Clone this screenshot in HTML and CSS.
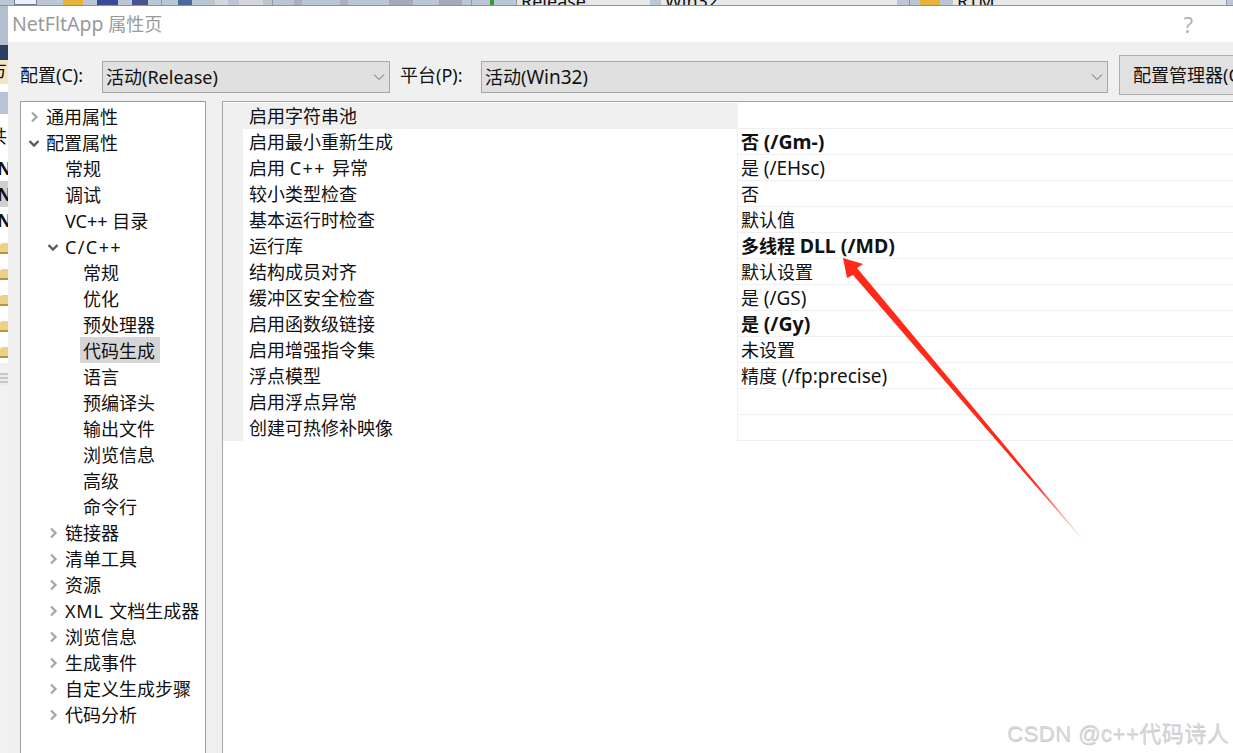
FILE: index.html
```html
<!DOCTYPE html>
<html lang="zh-CN">
<head>
<meta charset="utf-8">
<title>NetFltApp 属性页</title>
<link rel="stylesheet" href="styles.css">
</head>
<body>
<div class="toolbar">
  <i class="chip c1"></i><i class="chip c2"></i><i class="chip c3"></i><i class="chip c4"></i><i class="sep s1"></i><i class="chip c5"></i><i class="chip c6"></i><i class="chip c7"></i><i class="sep s2"></i><i class="chip c8"></i><i class="chip c9"></i><i class="chip c10"></i><i class="chip c11"></i><i class="sep s3"></i><i class="chip c12"></i>
  <span class="combo combo-a"><span>Release</span></span>
  <span class="combo combo-b"><span>Win32</span></span>
  <i class="sep s4"></i><i class="chip c13"></i>
  <span class="combo combo-c"><span>RTM</span></span>
</div>
<div class="stage">
  <div class="behind">
    <div class="b-seg b-icon"></div>
    <div class="b-seg b-navy"></div>
    <div class="b-seg b-cream"><span>方</span></div>
    <div class="b-seg b-white"></div>
    <div class="b-seg b-blue"></div>
    <div class="b-seg b-text"><span>共</span></div>
    <div class="b-seg b-name"><b>N</b></div>
    <div class="b-seg b-name b-sel"><b>N</b></div>
    <div class="b-seg b-name"><b>N</b></div>
    <div class="b-seg b-folder"><i></i></div>
    <div class="b-seg b-folder"><i></i></div>
    <div class="b-seg b-folder"><i></i></div>
    <div class="b-seg b-folder"><i></i></div>
    <div class="b-seg b-folder"><i></i></div>
    <div class="b-seg b-lines"></div>
  </div>
  <main class="dialog">
    <header class="title-bar">
      <span class="title"><span class="title-name">NetFltApp</span> 属性页</span>
      <span class="help">?</span>
    </header>
    <div class="body">
      <div class="config-row">
        <label class="field-label label-config">配置(C):</label>
        <div class="select select-config"><span>活动(Release)</span>
          <svg class="caret" width="12" height="8" viewBox="0 0 12 8"><path d="M1 1.5 6 6.5 11 1.5" fill="none" stroke="#6a6a6a" stroke-width="1"/></svg>
        </div>
        <label class="field-label label-platform">平台(P):</label>
        <div class="select select-platform"><span>活动(<span class="lat">Win32</span>)</span>
          <svg class="caret" width="12" height="8" viewBox="0 0 12 8"><path d="M1 1.5 6 6.5 11 1.5" fill="none" stroke="#6a6a6a" stroke-width="1"/></svg>
        </div>
        <button class="manager">配置管理器(O)...</button>
      </div>
      <div class="panes">
        <ul class="tree">
          <li class="l0"><svg class="chev closed" viewBox="0 0 12 12"><path d="M4 1.5 8.5 6 4 10.5"/></svg>通用属性</li>
          <li class="l0"><svg class="chev open" viewBox="0 0 12 12"><path d="M1.5 4 6 8.5 10.5 4"/></svg>配置属性</li>
          <li class="l1">常规</li>
          <li class="l1">调试</li>
          <li class="l1">VC++ 目录</li>
          <li class="l1"><svg class="chev open" viewBox="0 0 12 12"><path d="M1.5 4 6 8.5 10.5 4"/></svg><span class="spaced">C/C++</span></li>
          <li class="l2"><span>常规</span></li>
          <li class="l2"><span>优化</span></li>
          <li class="l2"><span>预处理器</span></li>
          <li class="l2"><span class="selected">代码生成</span></li>
          <li class="l2"><span>语言</span></li>
          <li class="l2"><span>预编译头</span></li>
          <li class="l2"><span>输出文件</span></li>
          <li class="l2"><span>浏览信息</span></li>
          <li class="l2"><span>高级</span></li>
          <li class="l2"><span>命令行</span></li>
          <li class="l1"><svg class="chev closed" viewBox="0 0 12 12"><path d="M4 1.5 8.5 6 4 10.5"/></svg>链接器</li>
          <li class="l1"><svg class="chev closed" viewBox="0 0 12 12"><path d="M4 1.5 8.5 6 4 10.5"/></svg>清单工具</li>
          <li class="l1"><svg class="chev closed" viewBox="0 0 12 12"><path d="M4 1.5 8.5 6 4 10.5"/></svg>资源</li>
          <li class="l1"><svg class="chev closed" viewBox="0 0 12 12"><path d="M4 1.5 8.5 6 4 10.5"/></svg><span class="spaced-s">XML </span>文档生成器</li>
          <li class="l1"><svg class="chev closed" viewBox="0 0 12 12"><path d="M4 1.5 8.5 6 4 10.5"/></svg>浏览信息</li>
          <li class="l1"><svg class="chev closed" viewBox="0 0 12 12"><path d="M4 1.5 8.5 6 4 10.5"/></svg>生成事件</li>
          <li class="l1"><svg class="chev closed" viewBox="0 0 12 12"><path d="M4 1.5 8.5 6 4 10.5"/></svg>自定义生成步骤</li>
          <li class="l1"><svg class="chev closed" viewBox="0 0 12 12"><path d="M4 1.5 8.5 6 4 10.5"/></svg>代码分析</li>
        </ul>
        <div class="grid">
          <div class="row row-active"><span class="name">启用字符串池</span><span class="value"></span></div>
          <div class="row"><span class="name">启用最小重新生成</span><span class="value strong">否 <span class="lat">(/Gm-)</span></span></div>
          <div class="row"><span class="name">启用 <span class="spaced">C++ </span>异常</span><span class="value">是 <span class="lat">(/EHsc)</span></span></div>
          <div class="row"><span class="name">较小类型检查</span><span class="value">否</span></div>
          <div class="row"><span class="name">基本运行时检查</span><span class="value">默认值</span></div>
          <div class="row"><span class="name">运行库</span><span class="value strong">多线程 <span class="lat">DLL (/MD)</span></span></div>
          <div class="row"><span class="name">结构成员对齐</span><span class="value">默认设置</span></div>
          <div class="row"><span class="name">缓冲区安全检查</span><span class="value">是 <span class="lat">(/GS)</span></span></div>
          <div class="row"><span class="name">启用函数级链接</span><span class="value strong">是 <span class="lat">(/Gy)</span></span></div>
          <div class="row"><span class="name">启用增强指令集</span><span class="value">未设置</span></div>
          <div class="row"><span class="name">浮点模型</span><span class="value">精度 <span class="lat">(/fp:precise)</span></span></div>
          <div class="row"><span class="name">启用浮点异常</span><span class="value"></span></div>
          <div class="row"><span class="name">创建可热修补映像</span><span class="value"></span></div>
        </div>
      </div>
    </div>
  </main>
</div>
<svg class="arrow" width="1233" height="753" viewBox="0 0 1233 753">
  <defs>
    <linearGradient id="fade" gradientUnits="userSpaceOnUse" x1="843" y1="258" x2="1082" y2="538">
      <stop offset="0" stop-color="#ff2a1a"/>
      <stop offset="0.8" stop-color="#ff2a1a"/>
      <stop offset="1" stop-color="#ff2a1a" stop-opacity="0.1"/>
    </linearGradient>
  </defs>
  <polygon fill="url(#fade)" points="843,258 863,264 857,268 1081,537 1080,537 853,275 847,278"/>
</svg>
<div class="watermark">CSDN @c++代码诗人</div>
</body>
</html>
```
FILE: styles.css
```css
* { box-sizing: border-box; }
html, body { margin: 0; height: 100%; }
body {
  width: 1233px;
  height: 753px;
  overflow: hidden;
  position: relative;
  display: flex;
  flex-direction: column;
  background: #f0f0f0;
  color: #111;
  font: 18px/26px "Noto Sans", "Noto Sans CJK SC", sans-serif;
}

/* clipped IDE toolbar behind the dialog */
.toolbar {
  flex: none;
  height: 6px;
  display: flex;
  overflow: hidden;
  background: #bcc7d5;
  border-bottom: 1px solid #8c929a;
}
.chip { flex: none; display: block; height: 5px; }
.sep { flex: none; display: block; width: 1px; height: 5px; background: #8f98a5; }
.c1 { width: 23px; margin-left: 14px; background: #eef2f8; border: 1px solid #6f7f99; border-top: 0; }
.c2 { width: 20px; margin-left: 26px; background: #e8b33c; }
.c3 { width: 21px; margin-left: 14px; background: #3a4a94; }
.c4 { width: 16px; margin-left: 14px; background: #46558f; }
.s1 { margin-left: 13px; }
.c5 { width: 14px; margin-left: 16px; background: #4a6a9a; }
.c6 { width: 13px; margin-left: 23px; background: #d4d8de; }
.c7 { width: 24px; margin-left: 11px; background: #d4d8de; }
.s2 { margin-left: 9px; }
.c8 { width: 8px; margin-left: 21px; background: #a9b1bd; }
.c9 { width: 8px; margin-left: 38px; background: #a9b1bd; }
.c10 { width: 24px; margin-left: 41px; background: #a3abb7; }
.c11 { width: 23px; margin-left: 26px; background: #a3abb7; }
.s3 { margin-left: 9px; }
.c12 { width: 4px; margin-left: 18px; background: #3a9a3a; }
.combo {
  flex: none;
  display: block;
  height: 5px;
  background: #e6e8eb;
  overflow: hidden;
  position: relative;
}
.combo span {
  position: absolute;
  left: 4px;
  bottom: -3px;
  line-height: 14px;
  font-size: 18px;
}
.combo-a { width: 134px; margin-left: 22px; border-left: 1px solid #8f98a5; }
.combo-b { width: 236px; margin-left: 11px; }
.s4 { margin-left: 12px; }
.c13 { width: 20px; margin-left: 10px; background: #e8b33c; }
.combo-c { width: 274px; margin-left: 13px; border-right: 1px solid #8f98a5; }

.stage { flex: 1; display: flex; min-height: 0; }

/* clipped project tree on the left */
.behind {
  flex: none;
  width: 8px;
  overflow: hidden;
  display: flex;
  flex-direction: column;
  background: #f1f1f1;
  line-height: 20px;
}
.b-seg { flex: none; overflow: hidden; white-space: nowrap; }
.b-icon { height: 39px; background: #b4bfcf; }
.b-navy { height: 15px; background: #2c3f63; }
.b-cream { height: 24px; background: #f3e6c4; }
.b-cream span { margin-left: -11px; }
.b-white { height: 8px; background: #fff; }
.b-blue { height: 22px; background: #b7c3d6; }
.b-text { height: 41px; background: #fff; padding-top: 12px; line-height: 20px; }
.b-text span { margin-left: -11px; }
.b-name { height: 26px; background: #fff; display: flex; align-items: center; }
.b-name b { margin-left: -3px; font-size: 18px; }
.b-sel { background: #d0d0d0; }
.b-folder { height: 26px; background: #fff; padding-top: 10px; }
.b-folder i { display: block; height: 11px; background: #ecd285; border-bottom: 2px solid #b8923c; border-radius: 3px 0 0 0; }
.b-lines { height: 12px; margin-top: 10px; background: repeating-linear-gradient(#c6c6c6 0 2px, #ececec 2px 4px); }

.dialog { flex: 1; min-width: 0; display: flex; flex-direction: column; background: #f0f0f0; }
.title-bar {
  flex: none;
  height: 36px;
  display: flex;
  justify-content: space-between;
  align-items: center;
  background: #fff;
  padding: 0 40px 0 4px;
  color: #9a9a9a;
}
.title-name { font-size: 19.5px; }
.help { color: #b4b4b4; font-size: 22px; }
.body { flex: 1; min-height: 0; display: flex; flex-direction: column; padding: 13px 0 0 12px; }
.config-row { flex: none; display: flex; align-items: flex-start; height: 40px; }
.field-label { flex: none; line-height: 26px; margin-top: 7px; }
.label-config { width: 82px; }
.label-platform { width: 81px; margin-left: 10px; }
.select {
  flex: none;
  height: 32px;
  margin-top: 6px;
  display: flex;
  align-items: center;
  justify-content: space-between;
  padding: 0 2px 0 3px;
  background: #e0e0e0;
  border: 1px solid #a6a6a6;
}
.select-config { width: 288px; }
.select-platform { width: 627px; margin-right: 11px; }
.caret { margin-right: 2px; }
.manager {
  flex: none;
  width: 130px;
  height: 40px;
  padding: 0 0 0 13px;
  text-align: left;
  white-space: nowrap;
  overflow: hidden;
  font: inherit;
  color: inherit;
  background: #e1e1e1;
  border: 1px solid #adadad;
}
.panes { flex: 1; min-height: 0; display: flex; gap: 16px; margin-top: 6px; }
.tree {
  flex: none;
  width: 186px;
  margin: 0;
  padding: 2px 0 0;
  list-style: none;
  background: #fff;
  border: 1px solid #9a9ea6;
  border-bottom: 0;
  white-space: nowrap;
}
.tree li { height: 26px; position: relative; }
.l0 { padding-left: 25px; }
.l1 { padding-left: 44px; }
.l2 { padding-left: 59px; }
.l2 span { display: inline-block; padding: 0 5px 0 3px; height: 26px; }
.l2 span.selected { height: 25px; background: #d6d6d6; box-shadow: 0 -1px 0 #d6d6d6; }
.chev { position: absolute; top: 7px; width: 12px; height: 12px; fill: none; stroke-width: 2.4; }
.l0 .chev { left: 7px; }
.l1 .chev { left: 26px; }
.closed { stroke: #a8a8a8; }
.open { stroke: #5a5a5a; }
.spaced { letter-spacing: 1.4px; }
.spaced-s { letter-spacing: 0.8px; }
.lat { font-size: 19px; }
.strong .lat { font-size: 19.5px; }
.grid {
  flex: 1;
  min-width: 0;
  padding-top: 1px;
  background: #fff;
  border-top: 1px solid #a6a6a6;
  border-left: 1px solid #a6a6a6;
  white-space: nowrap;
}
.row {
  height: 26px;
  display: grid;
  grid-template-columns: 514px 1fr;
  border-bottom: 1px solid #f0f0f0;
  line-height: 26px;
}
.name { padding-left: 26px; background: linear-gradient(90deg, #f0f0f0 20px, #fff 20px); }
.value { padding-left: 3px; border-left: 1px solid #f0f0f0; }
.row-active .name { background: #f0f0f0; }
.strong { font-weight: 700; }

.arrow { position: absolute; left: 0; top: 0; pointer-events: none; }
.watermark {
  position: absolute;
  right: 4px;
  top: 719px;
  font: 22px/30px "Liberation Sans", "Noto Sans CJK SC", sans-serif;
  letter-spacing: 0.5px;
  color: #d8d8d8;
  text-shadow: 0.5px 0.5px 0.5px #cacaca;
  white-space: nowrap;
}
```
